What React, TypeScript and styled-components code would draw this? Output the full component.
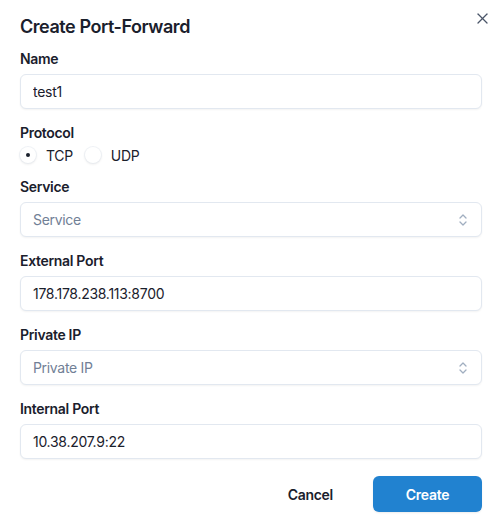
import React from "react";
import styled, { createGlobalStyle } from "styled-components";

const GlobalStyle = createGlobalStyle`
  html, body {
    margin: 0;
    padding: 0;
    background: #ffffff;
  }
  body {
    font-family: Inter, "Noto Sans", sans-serif;
    font-variant-numeric: proportional-nums;
    letter-spacing: -0.02em;
    color: #1a202c;
  }
  * { box-sizing: border-box; }
`;

const Dialog = styled.div`
  position: relative;
  width: 498px;
  height: 532px;
  background: #ffffff;
  padding: 14px 16px 20px 20px;
  display: flex;
  flex-direction: column;
`;

const Title = styled.h2`
  margin: 0 0 9px;
  font-size: 18px;
  line-height: 26px;
  font-weight: 600;
  color: #1a202c;
  letter-spacing: -0.025em;
`;

const CloseButton = styled.button`
  position: absolute;
  top: 8px;
  right: 6px;
  width: 20px;
  height: 20px;
  border: none;
  background: transparent;
  padding: 0;
  display: flex;
  align-items: center;
  justify-content: center;
  color: #4a5568;
  cursor: pointer;
`;

const Form = styled.div`
  display: flex;
  flex-direction: column;
  gap: 14px;
`;

const Field = styled.div<{ tight?: boolean }>`
  display: flex;
  flex-direction: column;
  gap: ${({ tight }) => (tight ? "4px" : "5px")};
`;

const Label = styled.label`
  font-size: 14px;
  line-height: 20px;
  font-weight: 600;
  color: #1a202c;
`;

const Input = styled.input`
  width: 462px;
  height: 35px;
  border: 1px solid #e2e8f0;
  border-radius: 6px;
  padding: 0 12px;
  font-family: inherit;
  font-size: 14px;
  letter-spacing: -0.02em;
  font-variant-numeric: proportional-nums;
  color: #1a202c;
  background: #ffffff;
  box-shadow: 0 1px 2px rgba(0, 0, 0, 0.05);
  outline: none;
  &::placeholder {
    color: #718096;
  }
`;

const SelectBox = styled.div`
  width: 462px;
  height: 35px;
  border: 1px solid #e2e8f0;
  border-radius: 6px;
  padding: 0 12px;
  display: flex;
  align-items: center;
  justify-content: space-between;
  font-size: 14px;
  color: #718096;
  background: #ffffff;
  box-shadow: 0 1px 2px rgba(0, 0, 0, 0.05);
`;

const RadioRow = styled.div`
  display: flex;
  align-items: center;
  gap: 12px;
  height: 16px;
`;

const RadioOption = styled.label`
  display: flex;
  align-items: center;
  gap: 10px;
  font-size: 14px;
  color: #1a202c;
`;

const RadioCircle = styled.span<{ checked?: boolean }>`
  width: 16px;
  height: 16px;
  border-radius: 50%;
  background: #ffffff;
  box-shadow: 0 0 0 1px rgba(226, 232, 240, 0.5), 0 1px 3px rgba(0, 0, 0, 0.1);
  display: flex;
  align-items: center;
  justify-content: center;
  &::after {
    content: "";
    width: 4px;
    height: 4px;
    border-radius: 50%;
    background: #1a202c;
    display: ${({ checked }) => (checked ? "block" : "none")};
  }
`;

const Footer = styled.div`
  display: flex;
  justify-content: flex-end;
  align-items: center;
  gap: 20px;
  margin-top: 17px;
`;

const GhostButton = styled.button`
  height: 36px;
  padding: 0 20px;
  border: none;
  background: transparent;
  font-family: inherit;
  font-size: 14px;
  font-weight: 600;
  letter-spacing: -0.02em;
  color: #1a202c;
  border-radius: 6px;
`;

const PrimaryButton = styled.button`
  width: 109px;
  height: 36px;
  border: none;
  border-radius: 6px;
  background: #2182d0;
  color: #ffffff;
  font-family: inherit;
  font-size: 14px;
  font-weight: 600;
  letter-spacing: -0.02em;
  box-shadow: 0 1px 2px rgba(0, 0, 0, 0.08);
`;

const Chevrons = () => (
  <svg width="12" height="14" viewBox="0 0 12 14" fill="none" stroke="#a0aec0" strokeWidth="1.3" strokeLinecap="round" strokeLinejoin="round">
    <path d="M3 5 L6 2 L9 5" />
    <path d="M3 9 L6 12 L9 9" />
  </svg>
);

const XIcon = () => (
  <svg width="11" height="11" viewBox="0 0 11 11" fill="none" stroke="currentColor" strokeWidth="1.3" strokeLinecap="round">
    <path d="M1 1 L10 10" />
    <path d="M10 1 L1 10" />
  </svg>
);

export default function App() {
  return (
    <>
      <GlobalStyle />
      <Dialog>
        <CloseButton aria-label="Close">
          <XIcon />
        </CloseButton>
        <Title>Create Port-Forward</Title>
        <Form>
          <Field>
            <Label>Name</Label>
            <Input defaultValue="test1" />
          </Field>
          <Field tight>
            <Label>Protocol</Label>
            <RadioRow>
              <RadioOption>
                <RadioCircle checked />
                TCP
              </RadioOption>
              <RadioOption>
                <RadioCircle />
                UDP
              </RadioOption>
            </RadioRow>
          </Field>
          <Field>
            <Label>Service</Label>
            <SelectBox>
              <span>Service</span>
              <Chevrons />
            </SelectBox>
          </Field>
          <Field>
            <Label>External Port</Label>
            <Input defaultValue="178.178.238.113:8700" />
          </Field>
          <Field>
            <Label>Private IP</Label>
            <SelectBox>
              <span>Private IP</span>
              <Chevrons />
            </SelectBox>
          </Field>
          <Field>
            <Label>Internal Port</Label>
            <Input defaultValue="10.38.207.9:22" />
          </Field>
        </Form>
        <Footer>
          <GhostButton>Cancel</GhostButton>
          <PrimaryButton>Create</PrimaryButton>
        </Footer>
      </Dialog>
    </>
  );
}
